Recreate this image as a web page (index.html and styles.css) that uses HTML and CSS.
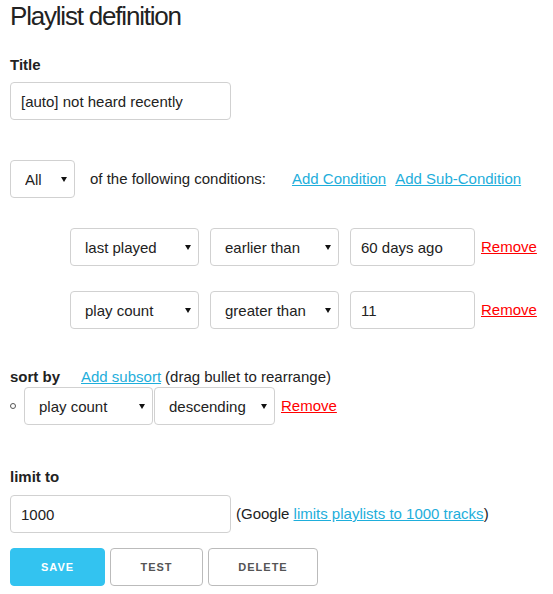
FILE: index.html
```html
<!DOCTYPE html>
<html>
<head>
<meta charset="utf-8">
<link rel="stylesheet" href="styles.css">
</head>
<body>
<div class="page">
  <h3 class="heading">Playlist definition</h3>
  <label class="label label-title">Title</label>
  <input class="field field-title" type="text" value="[auto] not heard recently">

  <div class="match-row">
    <span class="sel-wrap"><select class="sel sel-all"><option>All</option></select></span>
    <span class="match-text">of the following conditions:</span>
    <a class="link link-addcond" href="#">Add Condition</a>
    <a class="link" href="#">Add Sub-Condition</a>
  </div>

  <div class="conditions">
    <div class="cond-row">
      <span class="sel-wrap"><select class="sel sel-cond"><option>last played</option></select></span>
      <span class="sel-wrap"><select class="sel sel-cond"><option>earlier than</option></select></span>
      <input class="field field-value" type="text" value="60 days ago">
      <a class="remove" href="#">Remove</a>
    </div>
    <div class="cond-row">
      <span class="sel-wrap"><select class="sel sel-cond"><option>play count</option></select></span>
      <span class="sel-wrap"><select class="sel sel-cond"><option>greater than</option></select></span>
      <input class="field field-value" type="text" value="11">
      <a class="remove" href="#">Remove</a>
    </div>
  </div>

  <div class="sort-head">
    <span class="label">sort by</span>
    <a class="link link-subsort" href="#">Add subsort</a>
    <span>(drag bullet to rearrange)</span>
  </div>
  <div class="sort-row">
    <span class="bullet"></span>
    <span class="sel-wrap sort1"><select class="sel sel-sort1"><option>play count</option></select></span>
    <span class="sel-wrap sort2"><select class="sel sel-sort2"><option>descending</option></select></span>
    <a class="remove" href="#">Remove</a>
  </div>

  <label class="label label-limit">limit to</label>
  <div class="limit-row">
    <input class="field field-title" type="text" value="1000">
    <span class="limit-note">(Google <a class="link" href="#">limits playlists to 1000 tracks</a>)</span>
  </div>

  <div class="buttons">
    <button class="btn btn-primary btn-save">Save</button>
    <button class="btn btn-test">Test</button>
    <button class="btn btn-delete">Delete</button>
  </div>
</div>
</body>
</html>
```

FILE: styles.css
```css
html, body {
  margin: 0;
  padding: 0;
  background: #fff;
}
body {
  font-family: "Liberation Sans", Arial, sans-serif;
  font-size: 15px;
  line-height: 1.6;
  color: #222;
}
.page {
  padding: 0 10px;
}
.heading {
  margin: 0;
  padding-top: 1px;
  font-size: 26px;
  font-weight: 400;
  line-height: 30px;
  letter-spacing: -1.2px;
  color: #222;
}
.label {
  display: block;
  font-weight: 700;
  color: #222;
}
.label-title {
  margin-top: 24px;
  line-height: 20px;
  margin-bottom: 7px;
}
.field, .sel {
  box-sizing: border-box;
  height: 38px;
  padding: 6px 10px;
  background: #fff;
  border: 1px solid #D1D1D1;
  border-radius: 4px;
  font-family: "Liberation Sans", Arial, sans-serif;
  font-size: 15px;
  color: #222;
  margin: 0;
  outline: none;
}
.sel {
  -webkit-appearance: none;
  appearance: none;
  padding: 6px 24px 6px 14px;
}
.sel-wrap {
  position: relative;
  display: inline-flex;
}
.sel-wrap::after {
  content: "";
  position: absolute;
  right: 8px;
  top: 17px;
  width: 6px;
  height: 5px;
  background: #111;
  clip-path: polygon(0 0, 100% 0, 50% 100%);
  pointer-events: none;
}
.field-title {
  width: 221px;
  display: block;
}
.match-row {
  display: flex;
  align-items: center;
  margin-top: 40px;
}
.sel-all { width: 65px; }
.match-text { margin-left: 15px; }
.link {
  color: #1EAEDB;
  text-decoration: underline;
}
.link-addcond { margin-left: 26px; margin-right: 9px; }
.conditions {
  margin-top: 30px;
  padding-left: 60px;
  display: flex;
  flex-direction: column;
  gap: 25px;
}
.cond-row {
  display: flex;
  align-items: center;
  gap: 11px;
}
.sel-cond { width: 129px; }
.field-value { width: 125px; }
.remove {
  color: #f00;
  text-decoration: underline;
  margin-left: -5px;
}
.sort-head {
  display: flex;
  align-items: center;
  margin-top: 38px;
  line-height: 20px;
}
.link-subsort { margin-left: 21px; margin-right: 4px; }
.sort-row {
  display: flex;
  align-items: center;
  margin-top: 0;
}
.bullet {
  box-sizing: border-box;
  width: 6px;
  height: 6px;
  border: 1px solid #555;
  border-radius: 50%;
  margin-right: 8px;
}
.sel-sort1 { width: 129px; }
.sort1 { margin-right: 1px; }
.sel-sort2 { width: 121px; }
.sort2 { margin-right: 6px; }
.sort-row .remove { margin-left: 0; }
.label-limit {
  margin-top: 42px;
  line-height: 20px;
  margin-bottom: 8px;
}
.limit-row {
  display: flex;
  align-items: center;
}
.limit-note { margin-left: 5px; }
.buttons {
  display: flex;
  gap: 5px;
  margin-top: 15px;
}
.btn {
  box-sizing: border-box;
  height: 38px;
  padding: 0;
  border: 1px solid #bbb;
  border-radius: 4px;
  background: transparent;
  color: #555;
  font-family: "Liberation Sans", Arial, sans-serif;
  font-size: 11px;
  font-weight: 700;
  letter-spacing: 1px;
  text-transform: uppercase;
  text-align: center;
}
.btn-primary {
  background: #33C3F0;
  border-color: #33C3F0;
  color: #fff;
}
.btn-save { width: 95px; }
.btn-test { width: 93px; }
.btn-delete { width: 110px; }
```
